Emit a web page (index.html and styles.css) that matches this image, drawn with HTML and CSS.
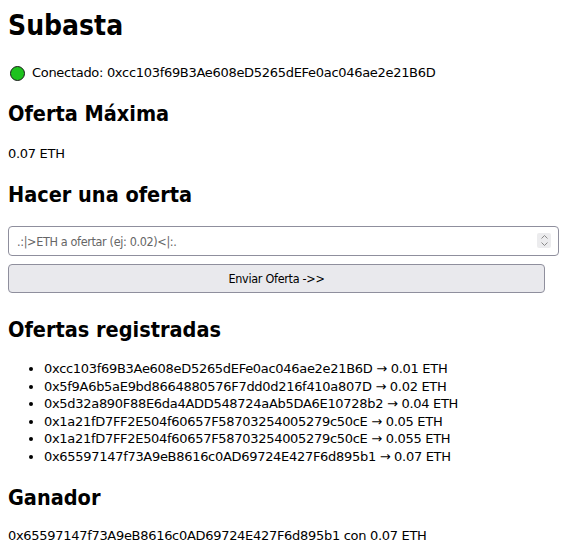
FILE: index.html
```html
<!DOCTYPE html>
<html lang="es">
<head>
<meta charset="utf-8">
<title>Subasta</title>
<link rel="stylesheet" href="styles.css">
</head>
<body>
<h1 class="title">Subasta</h1>
<div class="status"><span class="dot"></span><span>Conectado: 0xcc103f69B3Ae608eD5265dEFe0ac046ae2e21B6D</span></div>
<h2 class="section">Oferta Máxima</h2>
<p class="text">0.07 ETH</p>
<h2 class="section">Hacer una oferta</h2>
<div class="field">
  <input class="amount" type="number" placeholder=".:|>ETH a ofertar (ej: 0.02)<|:.">
  <span class="spin" aria-hidden="true">
    <svg width="9" height="13" viewBox="0 0 9 13"><path d="M1.5 4.5 L4.5 1.5 L7.5 4.5" fill="none" stroke="#8a8a8a" stroke-width="1"/><path d="M1.5 8.5 L4.5 11.5 L7.5 8.5" fill="none" stroke="#8a8a8a" stroke-width="1"/></svg>
  </span>
</div>
<button class="send">Enviar Oferta -&gt;&gt;</button>
<h2 class="section sec-list">Ofertas registradas</h2>
<ul class="bids">
<li>0xcc103f69B3Ae608eD5265dEFe0ac046ae2e21B6D → 0.01 ETH</li>
<li>0x5f9A6b5aE9bd8664880576F7dd0d216f410a807D → 0.02 ETH</li>
<li>0x5d32a890F88E6da4ADD548724aAb5DA6E10728b2 → 0.04 ETH</li>
<li>0x1a21fD7FF2E504f60657F58703254005279c50cE → 0.05 ETH</li>
<li>0x1a21fD7FF2E504f60657F58703254005279c50cE → 0.055 ETH</li>
<li>0x65597147f73A9eB8616c0AD69724E427F6d895b1 → 0.07 ETH</li>
</ul>
<h2 class="section sec-win">Ganador</h2>
<p class="text text-win">0x65597147f73A9eB8616c0AD69724E427F6d895b1 con 0.07 ETH</p>
</body>
</html>
```

FILE: styles.css
```css
html { background: #fff; }
body {
  margin: 8px;
  font-family: "DejaVu Sans", Verdana, sans-serif;
  font-size: 13px;
  letter-spacing: -0.3px;
  line-height: 18px;
  color: #000;
}
.title {
  font-family: "DejaVu Sans Condensed", "DejaVu Sans", sans-serif;
  font-size: 28px;
  line-height: 36px;
  letter-spacing: 0;
  margin: 0 0 20px;
}
.status {
  display: flex;
  align-items: center;
  gap: 7px;
  padding-left: 2px;
  height: 18px;
}
.dot {
  width: 13px;
  height: 13px;
  border-radius: 50%;
  background: #1ec21e;
  border: 1px solid #1a1a1a;
}
.section {
  font-family: "DejaVu Sans Condensed", "DejaVu Sans", sans-serif;
  font-size: 21.5px;
  line-height: 26px;
  letter-spacing: 0;
  margin: 19px 0 0;
}
.text { margin: 18px 0 0; }
.field {
  position: relative;
  display: flex;
  margin-top: 18px;
}
.amount {
  flex: 1;
  height: 30px;
  box-sizing: border-box;
  border: 1px solid #8f8f9d;
  border-radius: 4px;
  padding: 0 8px;
  font-family: "DejaVu Sans Condensed", "DejaVu Sans", sans-serif;
  font-size: 12.5px;
  letter-spacing: -0.35px;
  background: #fff;
  appearance: textfield;
  -moz-appearance: textfield;
}
.amount::-webkit-inner-spin-button,
.amount::-webkit-outer-spin-button { -webkit-appearance: none; margin: 0; }
.amount::placeholder { color: #666; }
.spin {
  position: absolute;
  right: 8px;
  top: 7px;
  width: 14px;
  height: 15px;
  background: #ececee;
  border-radius: 2px;
  display: flex;
  align-items: center;
  justify-content: center;
}
.send {
  display: block;
  width: 537px;
  height: 29px;
  margin-top: 8px;
  border: 1px solid #8f8f9d;
  border-radius: 4px;
  background: #e9e9ed;
  color: #000;
  font-family: "DejaVu Sans Condensed", "DejaVu Sans", sans-serif;
  font-size: 12.5px;
  letter-spacing: -0.3px;
}
.sec-list { margin-top: 24px; }
.bids {
  margin: 17px 0 0;
  padding-left: 36px;
  line-height: 17.5px;
}
.sec-win { margin-top: 20px; }
.text-win { margin-top: 16px; }
```
